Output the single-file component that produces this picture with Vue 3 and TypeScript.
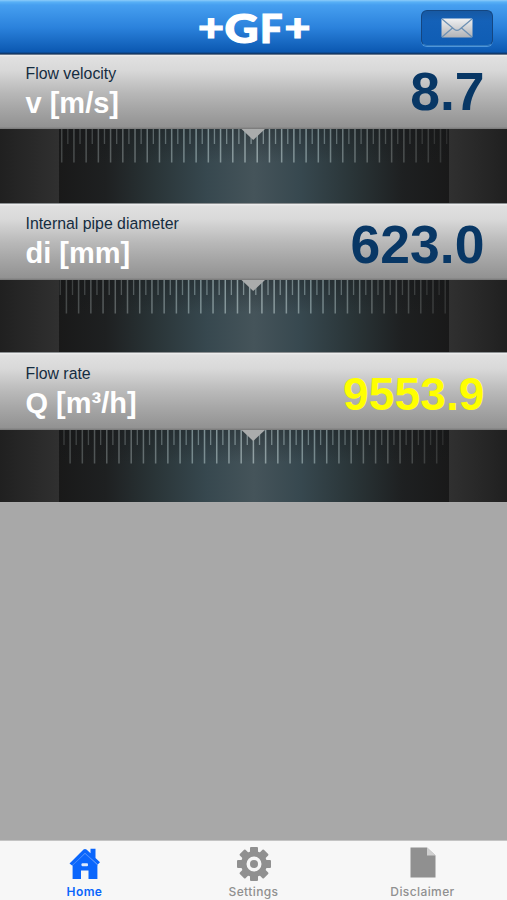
<script setup lang="ts">
interface Quantity {
  name: string
  unit: string
  value: string
  tone: 'navy' | 'yellow'
  size: 'first' | 'second' | 'third'
  tickStart: number
}

const quantities: Quantity[] = [
  { name: 'Flow velocity', unit: 'v [m/s]', value: '8.7', tone: 'navy', size: 'first', tickStart: 61.7 },
  { name: 'Internal pipe diameter', unit: 'di [mm]', value: '623.0', tone: 'navy', size: 'second', tickStart: 66.4 },
  { name: 'Flow rate', unit: 'Q [m³/h]', value: '9553.9', tone: 'yellow', size: 'third', tickStart: 70.1 },
]

const PITCH = 12.22
const DIAL_LEFT = 59
const DIAL_RIGHT = 449

function ticks(start: number, offset: number): number[] {
  const list: number[] = []
  for (let x = start + offset - PITCH; x < DIAL_RIGHT - 0.5; x += PITCH) {
    if (x > DIAL_LEFT + 0.5) list.push(x)
  }
  return list
}
</script>

<template>
  <div class="screen">
    <header class="bar">
      <svg class="logo" viewBox="0 0 120 54" width="120" height="54" aria-label="+GF+">
        <text class="plus" x="4" y="39.8" textLength="26" lengthAdjust="spacingAndGlyphs">+</text>
        <text class="letter" x="30.500" y="42" textLength="34" lengthAdjust="spacingAndGlyphs">G</text>
        <text class="letter" x="66" y="42" textLength="22.500" lengthAdjust="spacingAndGlyphs">F</text>
        <text class="plus" x="90.500" y="39.8" textLength="26" lengthAdjust="spacingAndGlyphs">+</text>
      </svg>
      <button class="mail" type="button" aria-label="Mail">
        <svg viewBox="0 0 32 20" width="32" height="20">
          <defs>
            <linearGradient id="envelope" x1="0" y1="0" x2="0" y2="1">
              <stop offset="0" stop-color="#f0f1f2" />
              <stop offset="1" stop-color="#b0b2b6" />
            </linearGradient>
          </defs>
          <rect x="0.5" y="0.5" width="31" height="19" rx="1" fill="url(#envelope)" />
          <path d="M1 1L13.5 11.5Q16 13.3 18.5 11.5L31 1M1 19L11.5 10M31 19L20.5 10" fill="none" stroke="#6d91b4" stroke-width="1.3" />
        </svg>
      </button>
    </header>

    <main class="content">
      <section v-for="q in quantities" :key="q.name" class="quantity" :class="q.size">
        <div class="panel">
          <div class="caption">
            <div class="name">{{ q.name }}</div>
            <div class="unit">{{ q.unit }}</div>
          </div>
          <div class="value" :class="q.tone">{{ q.value }}</div>
        </div>
        <div class="dial">
          <div class="side left"></div>
          <div class="wheel"></div>
          <div class="side right"></div>
          <svg class="scale" viewBox="0 0 507 36" width="507" height="36">
            <defs>
              <linearGradient :id="'fade-' + q.size" gradientUnits="userSpaceOnUse" x1="59" y1="0" x2="449" y2="0">
                <stop offset="0" stop-color="#424545" />
                <stop offset="0.15" stop-color="#5a6061" />
                <stop offset="0.35" stop-color="#788b8f" />
                <stop offset="0.5" stop-color="#91a0a3" />
                <stop offset="0.65" stop-color="#788b8f" />
                <stop offset="0.85" stop-color="#535858" />
                <stop offset="1" stop-color="#303131" />
              </linearGradient>
            </defs>
            <g :fill="`url(#fade-${q.size})`">
              <rect v-for="x in ticks(q.tickStart, 0)" :key="'l' + x" :x="x - 0.75" y="0" width="1.5" height="33.5" />
              <rect v-for="x in ticks(q.tickStart, PITCH / 2)" :key="'s' + x" :x="x - 0.65" y="0" width="1.3" height="15" opacity="0.8" />
            </g>
            <path d="M241.500 0H265L253.200 11Z" fill="#aaacac" />
          </svg>
        </div>
      </section>
    </main>

    <nav class="tabs">
      <a class="tab active">
        <svg viewBox="0 0 32 32" width="32" height="32">
          <path d="M0.500 16.500L14.500 2.500Q16 1.300 17.500 2.500L21.500 6.200V1.800H26.500V11L31 15.300L28.700 17.600L16 5.900L3.100 18.500Z" fill="currentColor" />
          <path d="M3.600 17.500L16 6L28.400 17.500V32H19.500V23.400H12V32H3.600Z" fill="currentColor" />
          <path d="M3 18.800L16 6.500L28.800 18.200" fill="none" stroke="#5090fc" stroke-width="0.8" />
          <rect x="12.500" y="16.200" width="6.500" height="3" rx="1" fill="#dce9fd" />
        </svg>
        <span>Home</span>
      </a>
      <a class="tab">
        <svg viewBox="0 0 34 34" width="34" height="34">
          <g fill="currentColor">
            <rect v-for="n in 8" :key="n" x="13" y="0" width="8" height="8" rx="1" :transform="`rotate(${n * 45} 17 17)`" />
            <path fill-rule="evenodd" d="M17 4A13 13 0 1 1 17 30A13 13 0 1 1 17 4ZM17 9.500A7.500 7.500 0 1 0 17 24.500A7.500 7.500 0 1 0 17 9.500Z" />
            <circle cx="17" cy="17" r="4" />
          </g>
        </svg>
        <span>Settings</span>
      </a>
      <a class="tab">
        <svg viewBox="0 0 26 31" width="26" height="31">
          <path d="M0.500 0.500H17L25.500 8.500V30.500H0.500Z" fill="currentColor" />
          <path d="M17 0.500L25.500 8.500H17Z" fill="#d0d0d0" />
        </svg>
        <span>Disclaimer</span>
      </a>
    </nav>
  </div>
</template>

<style>
body {
  margin: 0;
}
</style>

<style scoped>
.screen {
  width: 507px;
  height: 900px;
  display: flex;
  flex-direction: column;
  overflow: hidden;
  background: #a8a8a8;
  font-family: "Liberation Sans", Arial, sans-serif;
}
.bar {
  box-sizing: border-box;
  height: 55px;
  flex: none;
  display: grid;
  grid-template-columns: 1fr 120px 1fr;
  align-items: center;
  padding: 0 14px;
  background: linear-gradient(#8dccf9 0, #58b0f6 2px, #469ff0 5px, #2b82dc 50%, #0b58b1 52px, #0c3f7c 53px, #17345a 54px, #b7bcc1 55px);
}
.logo {
  grid-column: 2;
  display: block;
  overflow: visible;
}
.logo text {
  fill: #fff;
  stroke: #fff;
  stroke-width: 1.200px;
  font-family: Lato, sans-serif;
  font-weight: 900;
}
.letter {
  font-size: 40px;
}
.plus {
  font-size: 38px;
}
.mail {
  box-sizing: border-box;
  justify-self: end;
  width: 72px;
  height: 36px;
  padding: 0;
  display: flex;
  align-items: center;
  justify-content: center;
  border: 1.500px solid #144681;
  border-bottom-color: #347abd;
  border-radius: 6px;
  background: linear-gradient(#1759a3, #1461b8 30%, #0f5db4);
  box-shadow: 0 1px 0 #4d96dc;
}
.content {
  flex: 1;
}
.quantity {
  display: grid;
}
.first {
  grid-template-rows: 73.500px 75px;
}
.second {
  grid-template-rows: 76.500px 73px;
}
.third {
  grid-template-rows: 77px 73px;
}
.panel {
  box-sizing: border-box;
  display: flex;
  justify-content: space-between;
  padding: 0 22.500px 0 25.500px;
  background: linear-gradient(#f0f0f0 0, #e0e0e0 2px, #d9d9d9 20%, #b9b9b9 50%, #a6a6a6 72%, #929292 97%, #777 100%);
}
.caption {
  display: flex;
  flex-direction: column;
  padding-top: 10px;
  white-space: nowrap;
}
.second .caption {
  padding-top: 11.500px;
}
.third .caption {
  padding-top: 12px;
}
.name {
  font-size: 15.850px;
  line-height: 18px;
  color: #142c40;
}
.unit {
  margin-top: 2.500px;
  font-size: 29px;
  font-weight: 700;
  line-height: 34px;
  color: #fff;
}
.value {
  font-size: 53.500px;
  line-height: 73px;
  font-weight: 700;
}
.second .value {
  line-height: 81px;
}
.third .value {
  font-size: 46.300px;
  line-height: 82px;
}
.navy {
  color: #083765;
}
.yellow {
  color: #ff0;
}
.dial {
  position: relative;
  display: grid;
  grid-template-columns: 59px 390px 58px;
  border-bottom: 1px solid #aaa;
  background: #1b1b1b;
  box-sizing: border-box;
}
.second .dial,
.first .dial {
  border-bottom-color: #8c9092;
}
.left {
  background: linear-gradient(90deg, #202020, #303030);
}
.right {
  background: linear-gradient(90deg, #303030, #202020);
}
.wheel {
  background:
    linear-gradient(rgba(20, 22, 24, 0.35), rgba(20, 22, 24, 0) 45%),
    linear-gradient(90deg, #191919 0, #1e2021 12%, #2a3538 25%, #37484f 38%, #45545a 50%, #37484f 62%, #2a3538 75%, #1e2021 88%, #191919 100%);
}
.scale {
  position: absolute;
  left: 0;
  top: 0;
}
.tabs {
  box-sizing: border-box;
  height: 60px;
  flex: none;
  display: grid;
  grid-template-columns: repeat(3, 1fr);
  background: #f7f7f7;
  border-top: 1px solid #c4c4c4;
}
.tab {
  display: flex;
  flex-direction: column;
  align-items: center;
  justify-content: space-between;
  padding: 6px 0 1px;
  color: #909090;
  font-family: Inter, sans-serif;
  font-size: 12px;
  font-weight: 500;
  line-height: 15px;
  letter-spacing: 0.400px;
}
.tab svg {
  display: block;
}
.active {
  color: #0a66fc;
  font-weight: 600;
}
</style>
